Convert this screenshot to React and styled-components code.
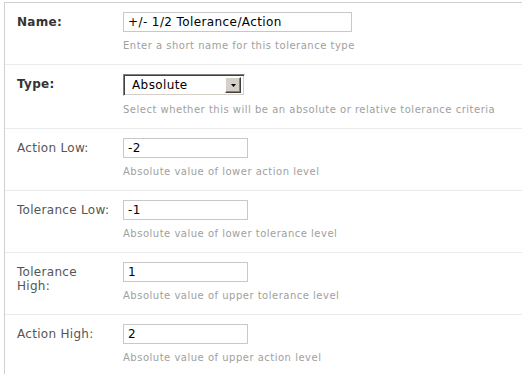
import React from 'react';
import styled, { createGlobalStyle } from 'styled-components';

const GlobalStyle = createGlobalStyle`
  html, body {
    margin: 0;
    padding: 0;
    background: #fff;
  }
  body {
    font-family: "DejaVu Sans", Verdana, sans-serif;
  }
`;

const Form = styled.div`
  margin: 2px 0 0 4px;
  border-top: 1px solid #d0d0d0;
  border-left: 1px solid #d0d0d0;
  min-height: 372px;
  box-sizing: border-box;
`;

const Row = styled.div`
  display: grid;
  grid-template-columns: 106px 1fr;
  padding: 9px 0 11px 12px;
  border-bottom: ${p => (p.last ? 'none' : '1px solid #ebebeb')};
`;

const Label = styled.div`
  font-size: 12px;
  line-height: 14px;
  padding-top: 3px;
  width: 93px;
  letter-spacing: 0.3px;
  color: ${p => (p.strong ? '#333' : '#555')};
  font-weight: ${p => (p.strong ? 'bold' : 'normal')};
`;

const Field = styled.div`
  display: flex;
  flex-direction: column;
  align-items: flex-start;
`;

const TextInput = styled.div`
  box-sizing: border-box;
  width: ${p => p.width}px;
  height: 20px;
  border: 1px solid #c8c8c8;
  padding: 0 4px;
  font-size: 12px;
  line-height: 18px;
  letter-spacing: 0.4px;
  color: #000;
  background: #fff;
`;

const Select = styled.div`
  box-sizing: border-box;
  width: 122px;
  height: 22px;
  display: flex;
  align-items: center;
  justify-content: space-between;
  border: 1px solid;
  border-color: #808080 #fff #fff #808080;
  box-shadow: inset 1px 1px 0 #404040, inset -1px -1px 0 #d4d0c8;
  padding: 0 3px 0 8px;
  font-size: 12px;
  letter-spacing: 0.4px;
  color: #000;
  background: #fff;
`;

const DropButton = styled.div`
  box-sizing: border-box;
  width: 16px;
  height: 16px;
  background: #d4d0c8;
  border: 1px solid;
  border-color: #fff #404040 #404040 #fff;
  box-shadow: inset -1px -1px 0 #808080;
  display: flex;
  align-items: center;
  justify-content: center;
`;

const Hint = styled.div`
  margin-top: 7px;
  font-size: 10px;
  line-height: 14px;
  letter-spacing: 0.5px;
  color: #a0a0a0;
  white-space: nowrap;
`;

const rows = [
  { label: 'Name:', strong: true, value: '+/- 1/2 Tolerance/Action', width: 229, hint: 'Enter a short name for this tolerance type' },
  { label: 'Type:', strong: true, select: 'Absolute', hint: 'Select whether this will be an absolute or relative tolerance criteria' },
  { label: 'Action Low:', value: '-2', width: 125, hint: 'Absolute value of lower action level' },
  { label: 'Tolerance Low:', value: '-1', width: 125, hint: 'Absolute value of lower tolerance level' },
  { label: 'Tolerance High:', value: '1', width: 125, hint: 'Absolute value of upper tolerance level' },
  { label: 'Action High:', value: '2', width: 125, hint: 'Absolute value of upper action level' },
];

export default function App() {
  return (
    <>
      <GlobalStyle />
      <Form>
        {rows.map((r, i) => (
          <Row key={r.label} last={i === rows.length - 1}>
            <Label strong={r.strong}>{r.label}</Label>
            <Field>
              {r.select ? (
                <Select>
                  {r.select}
                  <DropButton>
                    <svg width="5" height="3" viewBox="0 0 5 3">
                      <path d="M0 0h5L2.5 3z" fill="#000" />
                    </svg>
                  </DropButton>
                </Select>
              ) : (
                <TextInput width={r.width}>{r.value}</TextInput>
              )}
              <Hint>{r.hint}</Hint>
            </Field>
          </Row>
        ))}
      </Form>
    </>
  );
}
